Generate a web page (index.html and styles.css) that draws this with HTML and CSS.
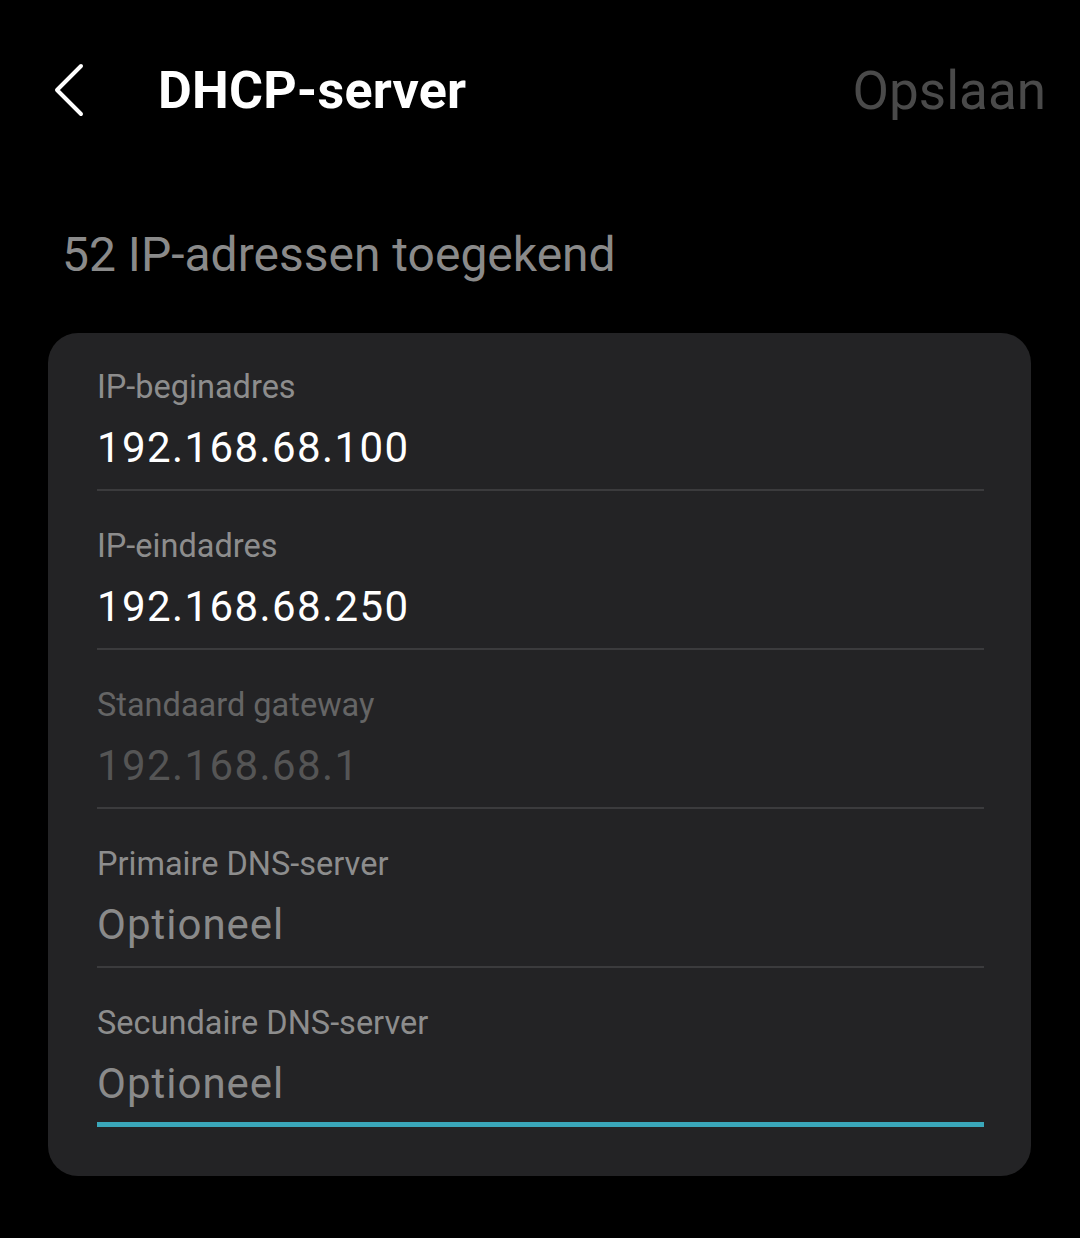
FILE: index.html
```html
<!DOCTYPE html>
<html lang="nl">
<head>
<meta charset="utf-8">
<link rel="stylesheet" href="styles.css">
</head>
<body>
<div class="screen">
  <header class="topbar">
    <svg class="back" width="40" height="60" viewBox="0 0 40 60" aria-hidden="true">
      <polyline points="28,5 4,29 28,53" fill="none" stroke="#ffffff" stroke-width="4" stroke-linecap="round" stroke-linejoin="round"/>
    </svg>
    <h1 class="title">DHCP-server</h1>
    <span class="save">Opslaan</span>
  </header>
  <p class="summary">52 IP-adressen toegekend</p>
  <section class="card">
    <div class="field">
      <div class="label">IP-beginadres</div>
      <div class="value">192.168.68.100</div>
      <div class="line"></div>
    </div>
    <div class="field">
      <div class="label">IP-eindadres</div>
      <div class="value">192.168.68.250</div>
      <div class="line"></div>
    </div>
    <div class="field disabled">
      <div class="label">Standaard gateway</div>
      <div class="value">192.168.68.1</div>
      <div class="line"></div>
    </div>
    <div class="field">
      <div class="label">Primaire DNS-server</div>
      <div class="value placeholder">Optioneel</div>
      <div class="line"></div>
    </div>
    <div class="field focused">
      <div class="label">Secundaire DNS-server</div>
      <div class="value placeholder">Optioneel</div>
      <div class="line"></div>
    </div>
  </section>
</div>
</body>
</html>
```

FILE: styles.css
```css
html, body {
  margin: 0;
  padding: 0;
  background: #000000;
}
body {
  font-family: Roboto, "Liberation Sans", sans-serif;
  color: #ffffff;
}
.screen {
  width: 1080px;
  height: 1238px;
  overflow: hidden;
}
.topbar {
  display: flex;
  align-items: center;
  padding: 61px 34px 0 53px;
  height: 60px;
}
.back {
  flex: none;
  display: block;
}
.title {
  margin: 0 0 0 65px;
  font-size: 52px;
  line-height: 60px;
  font-weight: 700;
  letter-spacing: 0.2px;
  color: #ffffff;
  flex: 1;
}
.save {
  font-size: 53px;
  line-height: 60px;
  color: #4a4a4a;
}
.summary {
  margin: 0;
  padding: 106px 0 0 62px;
  font-size: 48px;
  line-height: 56px;
  color: #8a8a8a;
}
.card {
  margin: 50px 49px 0 48px;
  background: #232325;
  border-radius: 30px;
  padding: 0 47px 49px 49px;
}
.field {
  padding-top: 36px;
}
.field + .field {
  padding-top: 37px;
}
.label {
  font-size: 32.5px;
  line-height: 36px;
  color: #8d8d8d;
}
.value {
  margin-top: 15px;
  font-size: 42px;
  line-height: 56px;
  letter-spacing: 1.4px;
  color: #ffffff;
}
.line {
  margin-top: 13px;
  height: 2px;
  background: #3b3b3d;
}
.disabled .label {
  color: #656565;
}
.disabled .value {
  color: #555555;
}
.value.placeholder {
  color: #8a8a8a;
  letter-spacing: 1px;
}
.focused .line {
  margin-top: 10px;
  height: 5px;
  background: #3aa7ba;
}
```
